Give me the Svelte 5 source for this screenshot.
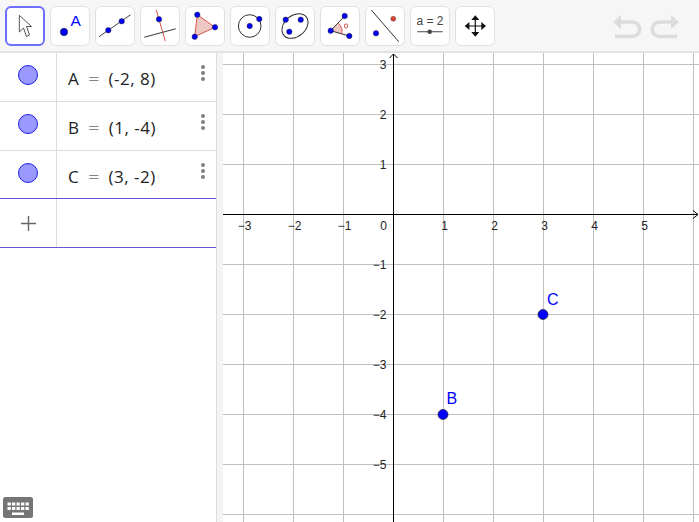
<script>
	const rows = [
		{ name: "A", value: "(-2, 8)" },
		{ name: "B", value: "(1, -4)" },
		{ name: "C", value: "(3, -2)" }
	];
	const w = 476;
	const h = 469;
	const ox = 170.5;
	const oy = 161.5;
	const xs = [-3, -2, -1, 0, 1, 2, 3, 4, 5, 6];
	const ys = [3, 2, 1, 0, -1, -2, -3, -4, -5, -6];
	const minus = (n) => (n < 0 ? "\u2212" + -n : "" + n);
	const keyX = [4.5, 9, 13.5, 18, 22.5];
</script>

<div class="app">
	<header class="toolbar">
		<div class="tools">
			<button class="tool active" aria-label="Move">
				<svg viewBox="0 0 38 38"><path d="M13.3 8.300V25l4.200-4 3 8.500 3-1.500-3-8.500h5z" fill="#fff" stroke="#555" stroke-width="1" stroke-linejoin="round" /></svg>
			</button>
			<button class="tool" aria-label="Point">
				<svg viewBox="0 0 38 38">
					<circle cx="13" cy="25" r="3.700" fill="#0000ff" stroke="#222" stroke-width=".6" />
					<text x="19.500" y="18.500" class="pt-label">A</text>
				</svg>
			</button>
			<button class="tool" aria-label="Line">
				<svg viewBox="0 0 38 38">
					<path d="M3 29.700 34.700 7.700" stroke="#444" stroke-width="1" />
					<circle cx="12.300" cy="23.300" r="2.700" class="dot" />
					<circle cx="25.700" cy="14.300" r="2.700" class="dot" />
				</svg>
			</button>
			<button class="tool" aria-label="Perpendicular">
				<svg viewBox="0 0 38 38">
					<path d="M15.300 3 24.300 34.300" stroke="#d9534a" stroke-width="1" />
					<path d="M3.300 30.300 34.700 21.700" stroke="#444" stroke-width="1.100" />
					<circle cx="18" cy="12.300" r="2.700" class="dot" />
				</svg>
			</button>
			<button class="tool" aria-label="Polygon">
				<svg viewBox="0 0 38 38">
					<path d="M11.300 7.700 29 20.300 8.700 29.700z" fill="#eec9c3" stroke="#d9534a" stroke-width="1" />
					<circle cx="11.300" cy="7.700" r="2.700" class="dot" />
					<circle cx="29" cy="20.300" r="2.700" class="dot" />
					<circle cx="8.700" cy="29.700" r="2.700" class="dot" />
				</svg>
			</button>
			<button class="tool" aria-label="Circle">
				<svg viewBox="0 0 38 38">
					<circle cx="18.700" cy="19" r="11.300" fill="none" stroke="#333" stroke-width="1" />
					<circle cx="18.700" cy="19" r="2.700" class="dot" />
					<circle cx="28.300" cy="12" r="2.700" class="dot" />
				</svg>
			</button>
			<button class="tool" aria-label="Ellipse">
				<svg viewBox="0 0 38 38">
					<ellipse cx="19" cy="19" rx="14.500" ry="10.500" transform="rotate(-40 19 19)" fill="none" stroke="#333" stroke-width="1" />
					<circle cx="9.700" cy="12.700" r="2.700" class="dot" />
					<circle cx="24.700" cy="12.700" r="2.700" class="dot" />
					<circle cx="13.300" cy="24.700" r="2.700" class="dot" />
				</svg>
			</button>
			<button class="tool" aria-label="Angle">
				<svg viewBox="0 0 38 38">
					<path d="M9.700 23.700 17.300 16.300A11 11 0 0 1 20.700 27.300z" fill="#eec9c3" />
					<path d="M9.700 23.700 23.700 9M9.700 23.700 28.300 29" stroke="#333" stroke-width="1" fill="none" />
					<path d="M17.300 16.300A11 11 0 0 1 20.700 27.300" stroke="#d9534a" stroke-width="1" fill="none" />
					<circle cx="23.700" cy="9" r="2.700" class="dot" />
					<circle cx="9.700" cy="23.700" r="2.700" class="dot" />
					<circle cx="28.300" cy="29" r="2.700" class="dot" />
					<ellipse cx="25" cy="19" rx="1.700" ry="2.100" fill="none" stroke="#d9534a" stroke-width="1" />
				</svg>
			</button>
			<button class="tool" aria-label="Reflect">
				<svg viewBox="0 0 38 38">
					<path d="M5.300 3 32.700 34.700" stroke="#333" stroke-width="1" />
					<circle cx="27.300" cy="11.700" r="2.500" fill="#e0402a" stroke="#555" stroke-width=".5" />
					<circle cx="10" cy="26.300" r="2.700" class="dot" />
				</svg>
			</button>
			<button class="tool" aria-label="Slider">
				<svg viewBox="0 0 38 38">
					<text x="19" y="17.500" class="slider-label">a = 2</text>
					<path d="M6.300 24.700H31.700" stroke="#666" stroke-width="1.200" />
					<circle cx="18.700" cy="24.700" r="2.300" fill="#444" />
				</svg>
			</button>
			<button class="tool" aria-label="Move view">
				<svg viewBox="0 0 38 38">
					<path d="M19.300 11v16M11 19h16.500" stroke="#111" stroke-width="1.200" />
					<path d="M19.300 8.300l4 4.700h-8zM19.300 29.700l4-4.700h-8zM8.700 19l4.700-4v8zM30 19l-4.700-4v8z" fill="#111" />
				</svg>
			</button>
		</div>
		<div class="history">
			<svg width="29" height="24" viewBox="0 0 29 24" aria-label="Undo">
				<path d="M7 7h12.500a7.200 7.200 0 0 1 0 14.400H2" fill="none" stroke="#dcdcdc" stroke-width="3.500" />
				<path d="M0 7 8 0v14z" fill="#dcdcdc" />
			</svg>
			<svg width="29" height="24" viewBox="0 0 29 24" aria-label="Redo">
				<path d="M22 7H9.500a7.200 7.200 0 0 0 0 14.400H27" fill="none" stroke="#dcdcdc" stroke-width="3.500" />
				<path d="M29 7 21 0v14z" fill="#dcdcdc" />
			</svg>
		</div>
	</header>

	<main class="body">
		<aside class="algebra">
			{#each rows as row}
				<div class="row">
					<div class="marble-cell"><span class="marble"></span></div>
					<div class="formula">
						<span class="expr"><span>{row.name}</span><span class="eq">=</span><span class="value">{row.value}</span></span>
						<span class="more"><i></i><i></i><i></i></span>
					</div>
				</div>
			{/each}
			<div class="row add">
				<div class="marble-cell">
					<svg width="15" height="15" viewBox="0 0 15 15"><path d="M7.500 0v15M0 7.500h15" stroke="#666" stroke-width="1.400" /></svg>
				</div>
				<div class="formula"></div>
			</div>
			<button class="keyboard" aria-label="Keyboard">
				<svg width="30" height="21" viewBox="0 0 30 21">
					<rect width="30" height="21" rx="2.500" fill="#757575" />
					{#each keyX as x}
						<rect {x} y="5.500" width="3.300" height="3" fill="#fff" />
						<rect {x} y="10" width="3.300" height="3" fill="#fff" />
					{/each}
					<rect x="9" y="15.500" width="12" height="2.500" fill="#fff" />
				</svg>
			</button>
		</aside>
		<div class="divider"></div>
		<section class="graphics">
			<svg width={w} height={h} viewBox="0 0 {w} {h}">
				{#each xs as x}
					{#if x !== 0}
						<line x1={ox + x * 50} x2={ox + x * 50} y1="0" y2={h} class="grid" />
					{/if}
				{/each}
				{#each ys as y}
					{#if y !== 0}
						<line x1="0" x2={w} y1={oy - y * 50} y2={oy - y * 50} class="grid" />
					{/if}
				{/each}
				<line x1="0" x2={w - 1} y1={oy} y2={oy} class="axis" />
				<line x1={ox} x2={ox} y1="1" y2={h} class="axis" />
				<path d="M{ox - 4} 5L{ox} 1L{ox + 4} 5" class="arrow" />
				<path d="M{w - 6} {oy - 4}L{w - 1} {oy}L{w - 6} {oy + 4}" class="arrow" />

				{#each xs as x}
					{#if x !== 0 && x < 6}
						<text x={ox + x * 50 + 1} y={oy + 15.500} text-anchor="middle" class="tick">{minus(x)}</text>
					{/if}
				{/each}
				<text x={ox - 10} y={oy + 15.500} text-anchor="middle" class="tick">0</text>
				{#each ys as y}
					{#if y !== 0 && y > -6}
						<text x={ox - 7} y={oy - y * 50 + 4} text-anchor="end" class="tick">{minus(y)}</text>
					{/if}
				{/each}

				<circle cx="220" cy="361.500" r="5" class="point" />
				<text x="223.500" y="351" class="point-label">B</text>
				<circle cx="320" cy="261.500" r="5" class="point" />
				<text x="324" y="252" class="point-label">C</text>
			</svg>
		</section>
	</main>
</div>

<style>
	:global(body) {
		margin: 0;
		background: #fff;
	}
	.app {
		width: 699px;
		height: 522px;
		display: flex;
		flex-direction: column;
		overflow: hidden;
		font-family: "Liberation Sans", sans-serif;
	}
	.toolbar {
		height: 53px;
		flex-shrink: 0;
		box-sizing: border-box;
		background: #f6f6f6;
		border-bottom: 2px solid #e2e2e2;
		display: flex;
		justify-content: space-between;
		align-items: flex-start;
	}
	.tools {
		display: flex;
		gap: 5px;
		padding: 6px 0 0 5px;
	}
	.tool {
		width: 40px;
		height: 40px;
		padding: 0;
		box-sizing: border-box;
		background: #fff;
		border: 1px solid #e1e1e1;
		border-radius: 6px;
		display: block;
	}
	.tool svg {
		display: block;
		width: 38px;
		height: 38px;
	}
	.tool.active {
		border: 2px solid #6e6eff;
	}
	.tool.active svg {
		margin: -1px;
	}
	.dot {
		fill: #0000ff;
		stroke: #222;
		stroke-width: 0.5;
	}
	.pt-label {
		font: 15.5px "Liberation Sans", sans-serif;
		fill: #0000ff;
	}
	.slider-label {
		font: 12px "Liberation Sans", sans-serif;
		fill: #444;
		text-anchor: middle;
	}
	.history {
		display: flex;
		gap: 8px;
		padding: 15px 20px 0 0;
	}
	.body {
		flex: 1;
		display: flex;
		min-height: 0;
	}
	.algebra {
		width: 216px;
		flex-shrink: 0;
		position: relative;
		background: #fff;
	}
	.row {
		display: flex;
		height: 49px;
		box-sizing: border-box;
		border-bottom: 1px solid #dcdcdc;
	}
	.row:nth-child(3) {
		height: 48px;
		border-bottom: 1px solid #6557d2;
	}
	.row.add {
		height: 49px;
		border-bottom: 1px solid #6557d2;
	}
	.marble-cell {
		width: 57px;
		flex-shrink: 0;
		border-right: 1px solid #dcdcdc;
		display: flex;
		justify-content: center;
		padding-top: 12px;
		box-sizing: border-box;
	}
	.row.add .marble-cell {
		padding-top: 17px;
	}
	.marble {
		width: 18px;
		height: 18px;
		border-radius: 50%;
		background: #9999ff;
		border: 1px solid #2020ee;
	}
	.formula {
		flex: 1;
		display: flex;
		justify-content: space-between;
		padding: 16px 11px 0 11px;
		font-family: "Open Sans", sans-serif;
		font-size: 17px;
		line-height: 20px;
		color: #222;
		white-space: pre;
	}
	.expr {
		display: flex;
		gap: 9px;
	}
	.eq {
		font-weight: 300;
		transform: scaleX(1.2);
		margin-left: 1px;
	}
	.value {
		letter-spacing: 0.5px;
		margin-left: 1px;
	}
	.more {
		display: flex;
		flex-direction: column;
		gap: 2px;
		margin-top: -4px;
	}
	.more i {
		width: 4px;
		height: 4px;
		border-radius: 50%;
		background: #808080;
	}
	.keyboard {
		position: absolute;
		left: 3px;
		top: 444px;
		padding: 0;
		border: 0;
		background: none;
		line-height: 0;
	}
	.divider {
		width: 7px;
		flex-shrink: 0;
		background: #f4f4f4;
		border-left: 1px solid #dcdcdc;
		box-sizing: border-box;
	}
	.graphics {
		flex: 1;
		min-width: 0;
	}
	.graphics svg {
		display: block;
	}
	.grid {
		stroke: #c0c0c0;
		stroke-width: 1;
	}
	.axis {
		stroke: #000;
		stroke-width: 1;
	}
	.arrow {
		fill: none;
		stroke: #000;
		stroke-width: 1;
	}
	.tick {
		font: 12px "Liberation Sans", sans-serif;
		fill: #222;
	}
	.point {
		fill: #0000ff;
		stroke: #222;
		stroke-width: 0.7;
	}
	.point-label {
		font: 16px "Liberation Sans", sans-serif;
		fill: #0000ff;
	}
</style>
